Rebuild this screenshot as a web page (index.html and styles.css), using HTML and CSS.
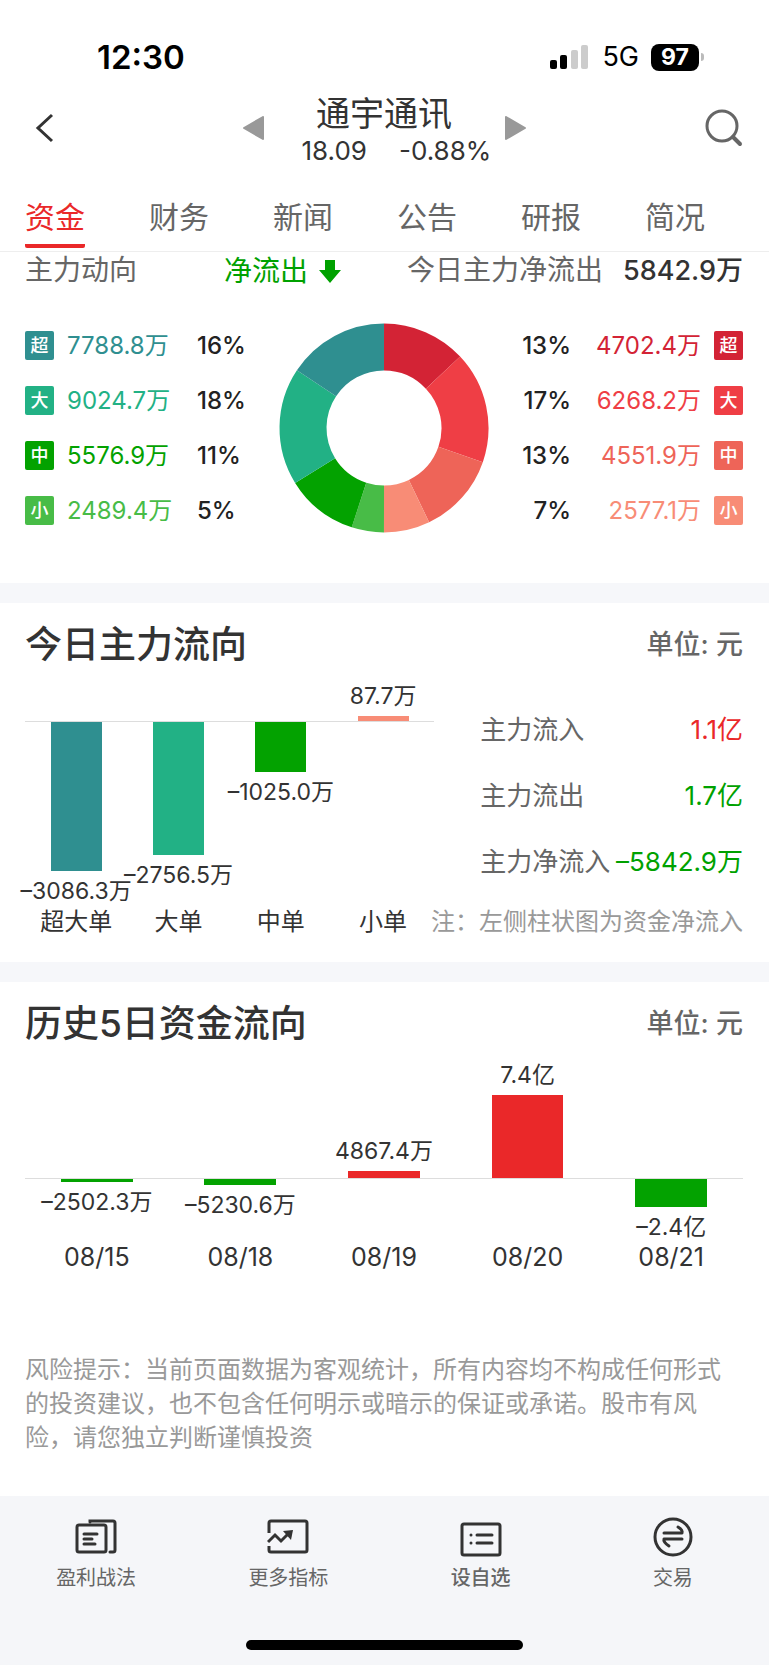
FILE: index.html
```html
<!DOCTYPE html>
<html lang="zh-CN">
<head>
	<meta charset="utf-8">
	<meta name="viewport" content="width=device-width, initial-scale=1">
	<title>通宇通讯</title>
	<link rel="stylesheet" href="styles.css">
</head>

<body>
	<div class="status">
		<span class="clock">12:30</span>
		<div class="status-right">
			<svg class="signal" viewBox="0 0 40 26">
				<rect x="0" y="16" width="7" height="9" rx="2" fill="#000"/>
				<rect x="10" y="11" width="7" height="14" rx="2" fill="#000"/>
				<rect x="21" y="6" width="7" height="19" rx="2" fill="#ccc"/>
				<rect x="31" y="1" width="7" height="24" rx="2" fill="#ccc"/>
			</svg>
			<span class="network">5G</span>
			<div class="battery"><span class="level">97</span><span class="nub"></span></div>
		</div>
	</div>

	<header class="header">
		<button class="icon-btn back" aria-label="返回">
			<svg width="20" height="30" viewBox="0 0 20 30"><path d="M17 2L3 15L17 28" fill="none" stroke="#333" stroke-width="3"/></svg>
		</button>
		<div class="stock">
			<button class="icon-btn" aria-label="上一只">
				<svg width="22" height="24" viewBox="0 0 22 24"><path d="M1 12L20 1V23Z" fill="#999" stroke="#999" stroke-width="2" stroke-linejoin="round"/></svg>
			</button>
			<div class="stock-info">
				<h1>通宇通讯</h1>
				<div class="quote"><span>18.09</span><span>-0.88%</span></div>
			</div>
			<button class="icon-btn" aria-label="下一只">
				<svg width="22" height="24" viewBox="0 0 22 24"><path d="M21 12L2 1V23Z" fill="#999" stroke="#999" stroke-width="2" stroke-linejoin="round"/></svg>
			</button>
		</div>
		<button class="icon-btn search" aria-label="搜索">
			<svg width="38" height="38" viewBox="0 0 38 38" fill="none" stroke="#666"><circle cx="17" cy="17" r="15" stroke-width="3"/><path d="M28 28L35 35" stroke-width="4" stroke-linecap="round"/></svg>
		</button>
	</header>

	<nav class="tabs">
		<a class="active" href="#">资金</a>
		<a href="#">财务</a>
		<a href="#">新闻</a>
		<a href="#">公告</a>
		<a href="#">研报</a>
		<a href="#">简况</a>
	</nav>

	<main>
		<section class="trend">
			<div class="summary">
				<span>主力动向</span>
				<span class="direction">净流出
					<svg width="22" height="24" viewBox="0 0 22 24"><path d="M6 1H16V11H22L11 24L0 11H6Z" fill="#00a100"/></svg>
				</span>
				<span class="net">今日主力净流出<strong>5842.9万</strong></span>
			</div>
			<div class="share">
				<ul class="legend">
					<li class="out-1"><b>超</b><span>7788.8万</span><em>16%</em></li>
					<li class="out-2"><b>大</b><span>9024.7万</span><em>18%</em></li>
					<li class="out-3"><b>中</b><span>5576.9万</span><em>11%</em></li>
					<li class="out-4"><b>小</b><span>2489.4万</span><em>5%</em></li>
				</ul>
				<svg class="donut" viewBox="0 0 210 210" fill="none" stroke-width="47">
					<path stroke="#d32335" d="M105 24A81 81 0 0 1 164 49.600"/>
					<path stroke="#ef3e45" d="M164 49.600A81 81 0 0 1 181.600 131.500"/>
					<path stroke="#ee6458" d="M181.600 131.500A81 81 0 0 1 140 178.100"/>
					<path stroke="#f88c76" d="M140 178.100A81 81 0 0 1 105 186"/>
					<path stroke="#48bc47" d="M105 186A81 81 0 0 1 80 182"/>
					<path stroke="#03a200" d="M80 182A81 81 0 0 1 36.100 147.600"/>
					<path stroke="#22b185" d="M36.100 147.600A81 81 0 0 1 37.500 60.300"/>
					<path stroke="#2f8f90" d="M37.500 60.300A81 81 0 0 1 105 24"/>
				</svg>
				<ul class="legend legend-in">
					<li class="in-1"><b>超</b><span>4702.4万</span><em>13%</em></li>
					<li class="in-2"><b>大</b><span>6268.2万</span><em>17%</em></li>
					<li class="in-3"><b>中</b><span>4551.9万</span><em>13%</em></li>
					<li class="in-4"><b>小</b><span>2577.1万</span><em>7%</em></li>
				</ul>
			</div>
		</section>

		<section class="today">
			<div class="title">
				<h2>今日主力流向</h2>
				<span>单位: 元</span>
			</div>
			<div class="today-grid">
				<div class="chart">
					<div class="col out-1">
						<div class="above"></div>
						<div class="below"><i class="bar" style="height:149px"></i><span>–3086.3万</span></div>
						<div class="name">超大单</div>
					</div>
					<div class="col out-2">
						<div class="above"></div>
						<div class="below"><i class="bar" style="height:133px"></i><span>–2756.5万</span></div>
						<div class="name">大单</div>
					</div>
					<div class="col out-3">
						<div class="above"></div>
						<div class="below"><i class="bar" style="height:50px"></i><span>–1025.0万</span></div>
						<div class="name">中单</div>
					</div>
					<div class="col in-4">
						<div class="above"><span>87.7万</span><i class="bar" style="height:5px"></i></div>
						<div class="below"></div>
						<div class="name">小单</div>
					</div>
				</div>
				<div class="side">
					<dl class="totals">
						<div><dt>主力流入</dt><dd class="up">1.1亿</dd></div>
						<div><dt>主力流出</dt><dd class="down">1.7亿</dd></div>
						<div><dt>主力净流入</dt><dd class="down">–5842.9万</dd></div>
					</dl>
					<p class="note">注：左侧柱状图为资金净流入</p>
				</div>
			</div>
		</section>

		<section class="history">
			<div class="title">
				<h2>历史5日资金流向</h2>
				<span>单位: 元</span>
			</div>
			<div class="chart chart-5">
				<div class="col fall">
					<div class="above"></div>
					<div class="below"><i class="bar" style="height:3px"></i><span>–2502.3万</span></div>
					<div class="name">08/15</div>
				</div>
				<div class="col fall">
					<div class="above"></div>
					<div class="below"><i class="bar" style="height:6px"></i><span>–5230.6万</span></div>
					<div class="name">08/18</div>
				</div>
				<div class="col rise">
					<div class="above"><span>4867.4万</span><i class="bar" style="height:7px"></i></div>
					<div class="below"></div>
					<div class="name">08/19</div>
				</div>
				<div class="col rise">
					<div class="above"><span>7.4亿</span><i class="bar" style="height:83px"></i></div>
					<div class="below"></div>
					<div class="name">08/20</div>
				</div>
				<div class="col fall">
					<div class="above"></div>
					<div class="below"><i class="bar" style="height:28px"></i><span>–2.4亿</span></div>
					<div class="name">08/21</div>
				</div>
			</div>
			<p class="risk">风险提示：当前页面数据为客观统计，所有内容均不构成任何形式的投资建议，也不包含任何明示或暗示的保证或承诺。股市有风险，请您独立判断谨慎投资</p>
		</section>
	</main>

	<footer class="footer">
		<nav class="toolbar">
			<a href="#">
				<svg viewBox="0 0 42 40" fill="none" stroke="#333" stroke-width="3" stroke-linecap="round">
					<rect x="2" y="8" width="29" height="27" rx="2"/>
					<path d="M15 5V4H38Q40 4 40 6V33Q40 35 38 35H35"/>
					<path d="M9 17H22M9 22H17M9 27H20"/>
				</svg>
				<span>盈利战法</span>
			</a>
			<a href="#">
				<svg viewBox="0 0 42 40" fill="none" stroke="#333" stroke-width="3">
					<path d="M2 16V6Q2 4 4 4H38Q40 4 40 6V33Q40 35 38 35H4Q2 35 2 33V29"/>
					<path d="M1 25L8 18L14 24L21 17"/>
					<path d="M16 14L26 13L24 23Z" fill="#333" stroke="none"/>
				</svg>
				<span>更多指标</span>
			</a>
			<a class="strong" href="#">
				<svg viewBox="0 0 42 40" fill="none" stroke="#333" stroke-width="3" stroke-linecap="round">
					<rect x="2" y="7" width="38" height="31" rx="2"/>
					<path d="M11 18H11.010M17 18H32M11 26H11.010M17 26H32"/>
				</svg>
				<span>设自选</span>
			</a>
			<a href="#">
				<svg viewBox="0 0 42 40" fill="none" stroke="#333" stroke-width="3" stroke-linecap="round" stroke-linejoin="round">
					<circle cx="21" cy="20" r="18"/>
					<path d="M12 16H30Q31 13 26 10M30 22H12Q11 25 17 29"/>
				</svg>
				<span>交易</span>
			</a>
		</nav>
		<div class="home-bar"></div>
	</footer>
</body>
</html>
```
FILE: styles.css
```css
*{
	box-sizing: border-box;
}
body{
	margin: 0;
	background-color: #fff;
	color: #333;
	font-family: Inter, "Noto Sans CJK SC", sans-serif;
	font-size: 24px;
}
h1, h2, p, ul, dl, dd{
	margin: 0;
	padding: 0;
}
a{
	color: inherit;
	text-decoration: none;
}
svg{
	display: block;
}

/* status bar */
.status{
	display: flex;
	justify-content: space-between;
	align-items: center;
	padding: 40px 65px 17px 97px;
	line-height: 34px;
	color: #000;
}
.clock{
	font-size: 33px;
	font-weight: 600;
}
.status-right{
	display: flex;
	align-items: center;
	gap: 12px;
}
.signal{
	width: 40px;
	height: 26px;
}
.network{
	font-size: 27px;
}
.battery{
	display: flex;
	align-items: center;
	gap: 2px;
}
.level{
	width: 48px;
	border-radius: 8px;
	background-color: #000;
	color: #fff;
	font-size: 23px;
	font-weight: 700;
	line-height: 27px;
	text-align: center;
}
.nub{
	width: 3px;
	height: 8px;
	border-radius: 0 3px 3px 0;
	background-color: #bbb;
}

/* header */
.header{
	display: grid;
	grid-template-columns: 1fr auto 1fr;
	align-items: center;
	padding: 0 26px 0 25px;
}
.icon-btn{
	padding: 0;
	border: 0;
	background: none;
}
.back{
	justify-self: start;
	padding-left: 10px;
}
.search{
	justify-self: end;
}
.stock{
	display: flex;
	align-items: center;
	gap: 37px;
}
.stock-info{
	width: 165px;
	text-align: center;
	white-space: nowrap;
}
.stock h1{
	font-size: 34px;
	font-weight: 400;
	line-height: 46px;
}
.quote{
	display: flex;
	gap: 32px;
	font-size: 26px;
	line-height: 28px;
}

/* tabs */
.tabs{
	display: flex;
	justify-content: space-between;
	padding: 30px 64px 3px 25px;
	border-bottom: 1px solid #eee;
	color: #666;
	font-size: 30px;
	line-height: 44px;
}
.tabs a{
	padding-bottom: 5px;
	border-bottom: 4px solid transparent;
	border-radius: 2px;
}
.tabs .active{
	border-color: #ea2829;
	color: #ea2829;
}

/* main force trend */
section{
	padding: 0 26px 0 25px;
	border-bottom: 20px solid #f6f7fa;
}
.summary{
	display: grid;
	grid-template-columns: auto 1fr auto;
	color: #666;
	font-size: 28px;
	line-height: 36px;
}
.direction{
	display: flex;
	align-items: center;
	gap: 11px;
	padding-left: 87px;
	color: #00a100;
}
.net strong{
	margin-left: 20px;
	color: #333;
	font-size: 27px;
	font-weight: 500;
}
.share{
	display: flex;
	justify-content: space-between;
	align-items: center;
	padding: 34px 0 50px;
}
.donut{
	width: 210px;
	height: 210px;
}
.legend{
	display: flex;
	flex: 1;
	flex-direction: column;
	gap: 26px;
	list-style: none;
	line-height: 29px;
}
.legend li{
	display: flex;
}
.legend b{
	width: 29px;
	border-radius: 2px;
	background-color: var(--tone);
	color: #fff;
	font-size: 18px;
	font-weight: 500;
	text-align: center;
}
.legend span{
	width: 143px;
	padding-left: 13px;
	color: var(--tone);
}
.legend em{
	color: #222;
	font-style: normal;
	font-weight: 500;
}
.legend-in li{
	flex-direction: row-reverse;
}
.legend-in span{
	padding: 0 13px 0 0;
	text-align: right;
}
.out-1{ --tone: #2f8f90; }
.out-2{ --tone: #22b185; }
.out-3{ --tone: #03a200; }
.out-4{ --tone: #48bc47; }
.in-1{ --tone: #d32335; }
.in-2{ --tone: #ef3e45; }
.in-3{ --tone: #ee6458; }
.in-4{ --tone: #f88c76; }
.rise{ --tone: #ea2829; }
.fall{ --tone: #03a200; }

/* section titles */
.title{
	display: flex;
	justify-content: space-between;
	align-items: center;
	padding-top: 17px;
	line-height: 50px;
}
.title h2{
	font-size: 37px;
	font-weight: 500;
}
.title span{
	color: #666;
	font-size: 27px;
	font-weight: 500;
}

/* bar charts */
.chart{
	display: grid;
	grid-template-columns: repeat(4, 1fr);
}
.chart-5{
	grid-template-columns: repeat(5, 1fr);
}
.col{
	min-width: 0;
}
.above, .below{
	display: flex;
	flex-direction: column;
	align-items: center;
	gap: 6px;
	height: 184px;
	font-size: 23px;
	line-height: 28px;
	white-space: nowrap;
}
.above{
	justify-content: flex-end;
	height: 52px;
	border-bottom: 1px solid #ddd;
}
.chart-5 .above{
	height: 130px;
}
.chart-5 .below{
	height: 62px;
}
.bar{
	flex: none;
	width: 50%;
	background-color: var(--tone);
}
.name{
	line-height: 32px;
	text-align: center;
}
.chart-5 .name{
	font-size: 25px;
}

/* today */
.today{
	padding-bottom: 24px;
}
.today-grid{
	display: grid;
	grid-template-columns: 57% 43%;
}
.side{
	display: flex;
	flex-direction: column;
	justify-content: space-between;
	align-items: flex-end;
	min-width: 0;
	white-space: nowrap;
}
.totals{
	width: 100%;
	padding: 27px 0 0 46px;
	font-size: 26px;
	line-height: 66px;
}
.totals div{
	display: flex;
	justify-content: space-between;
}
.totals dt{
	color: #666;
}
.up{
	color: #ea2829;
}
.down{
	color: #00a100;
}
.note{
	color: #999;
	line-height: 32px;
}

/* history */
.history{
	padding-bottom: 41px;
	border-bottom: 0;
}
.risk{
	margin-top: 80px;
	color: #999;
	line-height: 34px;
}

/* footer */
.footer{
	padding: 21px 0 16px;
	background-color: #f5f6f9;
}
.toolbar{
	display: grid;
	grid-template-columns: repeat(4, 1fr);
	color: #666;
	font-size: 20px;
	line-height: 26px;
}
.toolbar a{
	display: flex;
	flex-direction: column;
	align-items: center;
	gap: 8px;
}
.toolbar svg{
	width: 42px;
	height: 40px;
}
.toolbar .strong{
	font-weight: 500;
}
.home-bar{
	width: 36%;
	height: 10px;
	margin: 49px auto 0;
	border-radius: 5px;
	background-color: #000;
}
```
